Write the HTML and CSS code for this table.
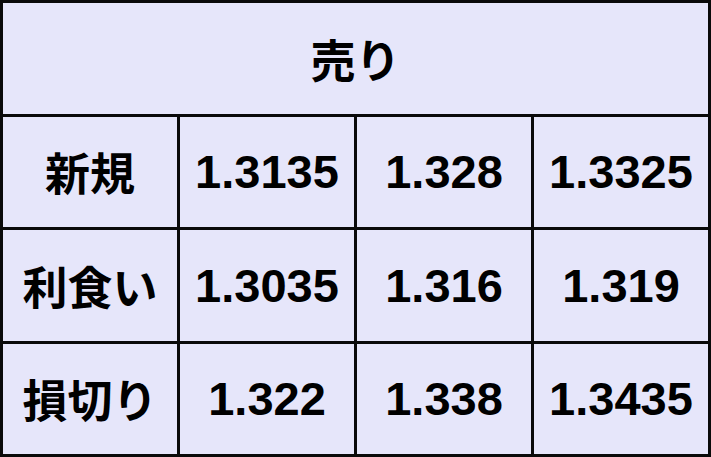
FILE: index.html
```html
<!DOCTYPE html>
<html lang="ja">
<head>
<meta charset="utf-8">
<title>売り</title>
<link rel="stylesheet" href="styles.css">
</head>
<body>
<div class="board">
  <div class="cell head">売り</div>
  <div class="cell label">新規</div>
  <div class="cell num">1.3135</div>
  <div class="cell num">1.328</div>
  <div class="cell num">1.3325</div>
  <div class="cell label">利食い</div>
  <div class="cell num">1.3035</div>
  <div class="cell num">1.316</div>
  <div class="cell num">1.319</div>
  <div class="cell label">損切り</div>
  <div class="cell num">1.322</div>
  <div class="cell num">1.338</div>
  <div class="cell num">1.3435</div>
</div>
</body>
</html>
```
FILE: styles.css
```css
html, body {
  margin: 0;
  padding: 0;
  background: #e6e6fa;
}
.board {
  box-sizing: border-box;
  width: 711px;
  height: 457px;
  display: grid;
  grid-template-columns: repeat(4, 1fr);
  grid-template-rows: repeat(4, 1fr);
  gap: 3px;
  padding: 3px;
  background: #0a0a0a;
}
.cell {
  background: #e6e6fa;
  display: flex;
  align-items: center;
  justify-content: center;
  color: #000;
  font-family: "Liberation Sans", "Noto Sans CJK JP", sans-serif;
  font-weight: bold;
  font-size: 47px;
  line-height: 1;
}
.head {
  grid-column: 1 / -1;
}
.head, .label {
  font-family: "Noto Sans CJK JP", sans-serif;
  font-size: 45px;
}
```
